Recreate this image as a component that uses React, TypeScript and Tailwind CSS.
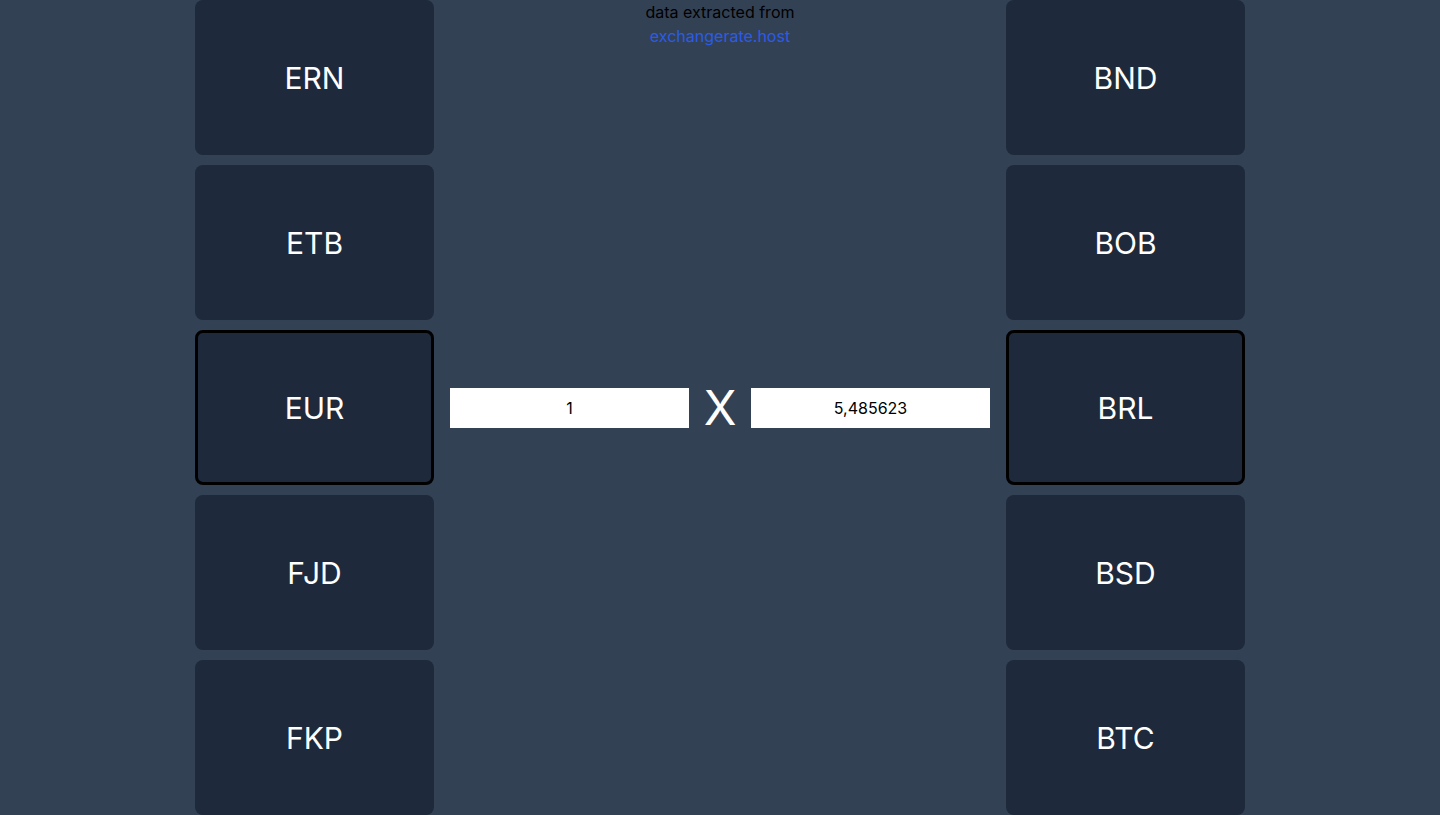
import React from "react";

const left = ["ERN", "ETB", "EUR", "FJD", "FKP"];
const right = ["BND", "BOB", "BRL", "BSD", "BTC"];

function CurrencyColumn({ codes, selected }: { codes: string[]; selected: string }) {
  return (
    <div className="flex w-[239px] shrink-0 flex-col gap-[10px] overflow-hidden">
      {codes.map((code) => (
        <div
          key={code}
          className={`flex h-[155px] shrink-0 items-center justify-center rounded-lg bg-[#1e293b] text-3xl text-white ${
            code === selected ? "border-[3px] border-black" : ""
          }`}
        >
          {code}
        </div>
      ))}
    </div>
  );
}

export default function App() {
  return (
    <div
      className="flex h-[815px] w-full justify-center gap-4 overflow-hidden bg-[#334155]"
      style={{ fontFamily: "Inter, 'Noto Sans', sans-serif" }}
    >
      <CurrencyColumn codes={left} selected="EUR" />
      <div className="flex w-[540px] flex-col">
        <div className="flex flex-col items-center text-base leading-6">
          <span className="text-black">data extracted from</span>
          <a className="text-[#2b5ce6]">exchangerate.host</a>
        </div>
        <div className="flex flex-1 items-center">
          <input
            readOnly
            value="1"
            className="h-10 w-[239px] bg-white text-center text-base text-black outline-none"
          />
          <span className="flex w-[62px] justify-center text-5xl leading-none text-white">X</span>
          <input
            readOnly
            value="5,485623"
            className="h-10 w-[239px] bg-white text-center text-base text-black outline-none"
          />
        </div>
        <div className="h-12" />
      </div>
      <CurrencyColumn codes={right} selected="BRL" />
    </div>
  );
}
